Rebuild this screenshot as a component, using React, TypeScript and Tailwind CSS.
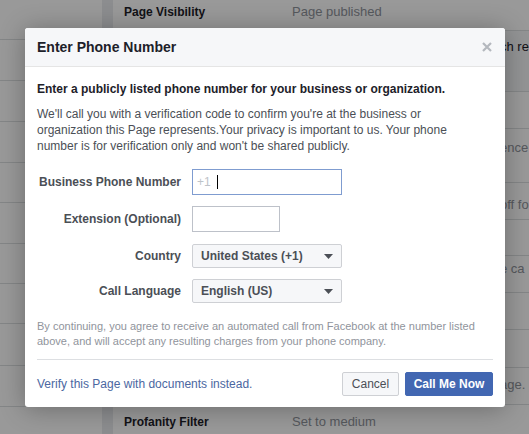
import React from "react"

const leftRows = [39, 41, 41, 41, 40, 41, 40, 40, 42, 41, 41]

const rightRows = [
  { h: 31, pt: 4, label: "Page Visibility", value: "Page published" },
  { h: 61, pt: 8, tail: "ch re", dark: true, bg: "bg-[#f6f7f9]" },
  { h: 37 },
  { h: 54, pt: 11, tail: "ence" },
  { h: 37, pt: 14, tail: "off fo" },
  { h: 36 },
  { h: 37, pt: 5, tail: "e ca" },
  { h: 37 },
  { h: 38 },
  { h: 37, pt: 9, tail: "age." },
  { h: 40, pt: 9, label: "Profanity Filter", value: "Set to medium" },
]

function Caret() {
  return (
    <svg width="9" height="5" viewBox="0 0 9 5" className="shrink-0">
      <polygon points="0,0 9,0 4.5,5" fill="#4b4f56" />
    </svg>
  )
}

function FormRow({ label, children }: { label: string; children: React.ReactNode }) {
  return (
    <div className="flex items-center">
      <div className="w-[145px] pr-[1px] text-right text-[12px] font-bold text-[#4b4f56]">{label}</div>
      <div className="ml-[10px]">{children}</div>
    </div>
  )
}

function Select({ value }: { value: string }) {
  return (
    <div className="flex h-[24px] w-[150px] items-center justify-between rounded-[2px] border border-[#ced0d4] bg-[#f6f7f9] pl-[8px] pr-[8px]">
      <span className="text-[12px] font-bold text-[#4b4f56]">{value}</span>
      <Caret />
    </div>
  )
}

export default function App() {
  return (
    <div className="relative h-[434px] w-[529px] overflow-hidden font-['Liberation_Sans',Arial,sans-serif]">
      {/* page behind the dialog */}
      <div className="flex h-full">
        <div className="flex w-[102px] flex-col bg-white">
          {leftRows.map((h, i) => (
            <div
              key={i}
              className={i === 0 ? "shrink-0" : "shrink-0 border-t border-[#dddfe2]"}
              style={{ height: h }}
            />
          ))}
        </div>
        <div className="w-[11px] bg-[#e9ebee]" />
        <div className="flex flex-1 flex-col bg-white">
          {rightRows.map((r, i) => (
            <div
              key={i}
              className={`flex shrink-0 items-start border-b border-[#dddfe2] text-[12px] leading-[16px] whitespace-nowrap ${r.bg ?? ""}`}
              style={{ height: r.h, paddingTop: r.pt ?? 0 }}
            >
              {r.label ? (
                <>
                  <span className="w-[179px] pl-[11px] font-bold text-[#1d2129]">{r.label}</span>
                  <span className="text-[13px] text-[#90949c]">{r.value}</span>
                </>
              ) : r.tail ? (
                <span className={`pl-[387px] text-[13px] ${r.dark ? "text-[#1d2129]" : "text-[#90949c]"}`}>
                  {r.tail}
                </span>
              ) : null}
            </div>
          ))}
        </div>
      </div>

      <div className="absolute inset-0 bg-black/40" />

      {/* dialog */}
      <div className="absolute inset-0 pl-[25px] pt-[28px]">
        <div className="w-[480px] overflow-hidden rounded-[3px] bg-white shadow-[0_2px_26px_rgba(0,0,0,0.3)]">
          <div className="flex h-[39px] items-center justify-between border-b border-[#e5e5e5] bg-[#f6f7f9] pl-[12px] pr-[13px]">
            <div className="text-[14px] font-bold text-[#1d2129]">Enter Phone Number</div>
            <svg width="10" height="10" viewBox="0 0 10 10">
              <path d="M1 1 L9 9 M9 1 L1 9" stroke="#b4b8be" strokeWidth="2.2" />
            </svg>
          </div>

          <div className="px-[12px] pt-[14px]">
            <div className="text-[12px] leading-[16px] font-bold text-[#1d2129]">
              Enter a publicly listed phone number for your business or organization.
            </div>
            <p className="mt-[9px] w-[430px] text-[12px] leading-[16px] text-[#4b4f56]">
              We'll call you with a verification code to confirm you're at the business or organization this Page
              represents.Your privacy is important to us. Your phone number is for verification only and won't be
              shared publicly.
            </p>

            <div className="mt-[15px] flex flex-col">
              <FormRow label="Business Phone Number">
                <div className="flex h-[26px] w-[150px] items-center border border-[#7f9cd0] pl-[4px]">
                  <span className="text-[12px] text-[#bec3c9]">+1</span>
                  <span className="ml-[6px] h-[14px] w-px bg-black" />
                </div>
              </FormRow>
              <div className="mt-[11px]">
                <FormRow label="Extension (Optional)">
                  <div className="h-[26px] w-[88px] border border-[#bdc1c9]" />
                </FormRow>
              </div>
              <div className="mt-[12px]">
                <FormRow label="Country">
                  <Select value="United States (+1)" />
                </FormRow>
              </div>
              <div className="mt-[11px]">
                <FormRow label="Call Language">
                  <Select value="English (US)" />
                </FormRow>
              </div>
            </div>

            <p className="mt-[16px] w-[440px] text-[11px] leading-[15px] text-[#90949c]">
              By continuing, you agree to receive an automated call from Facebook at the number listed above, and
              will accept any resulting charges from your phone company.
            </p>

            <div className="mt-[10px] border-t border-[#dddfe2]" />

            <div className="flex items-center justify-between pt-[12px] pb-[11px]">
              <span className="text-[12px] text-[#4b67a1]">Verify this Page with documents instead.</span>
              <div className="flex gap-[6px]">
                <button className="h-[24px] w-[57px] rounded-[2px] border border-[#ced0d4] bg-[#f6f7f9] text-[12px] text-[#4b4f56]">
                  Cancel
                </button>
                <button className="h-[24px] w-[88px] rounded-[2px] border border-[#4267b2] bg-[#4267b2] text-[12px] font-bold text-white">
                  Call Me Now
                </button>
              </div>
            </div>
          </div>
        </div>
      </div>
    </div>
  )
}
